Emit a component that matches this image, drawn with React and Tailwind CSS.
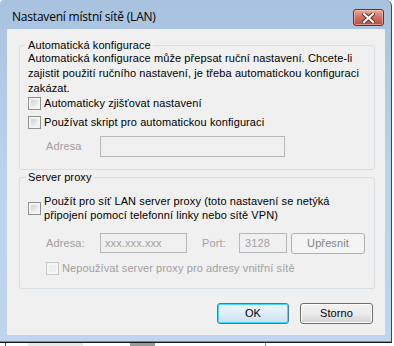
import React from "react";

const Check = ({ disabled }) => (
  <span
    className={`w-[13px] h-[13px] shrink-0 border p-[2px] flex ${
      disabled ? "border-[#c6c6c6] bg-[#f7f7f7]" : "border-[#8e8f8f] bg-[#f4f4f4]"
    }`}
  >
    <span
      className={`flex-1 ${
        disabled
          ? "bg-[#f0f0f0]"
          : "bg-gradient-to-br from-[#cfd1d4] to-[#f7f7f7]"
      }`}
    />
  </span>
);

const Field = ({ className, children }) => (
  <div
    className={`border border-[#b5b8bb] bg-[#f0f0f0] flex items-center text-[#a0a0a0] ${className}`}
  >
    {children}
  </div>
);

const Btn = ({ children, primary, disabled, className }) => (
  <div
    className={`h-[21px] rounded-[3px] border flex items-center justify-center text-[11px] ${
      primary
        ? "border-[#3c7fb1] shadow-[inset_0_0_0_1px_#48d7fb] bg-gradient-to-b from-[#eaf6fd] via-[#e0eef8] to-[#c9e0ef] text-black"
        : disabled
        ? "border-[#adb2b5] bg-[#f4f4f4] text-[#838383]"
        : "border-[#707070] shadow-[inset_0_0_0_1px_#fcfcfc] bg-gradient-to-b from-[#f2f2f2] via-[#ebebeb] to-[#d2d2d2] text-black"
    } ${className}`}
  >
    {children}
  </div>
);

export default function App() {
  return (
    <div className="w-[394px] h-[346px] bg-white overflow-hidden flex flex-col font-['Liberation_Sans',sans-serif] tracking-[0.1px]">
      <div className="w-[392px] h-[342px] shrink-0 rounded-tr-[6px] rounded-tl-[4px] border-r border-[#3b4a5a] bg-gradient-to-b from-[#a8c2df] via-[#bad2ec] to-[#bfd5ee] flex flex-col">
        {/* title bar */}
        <div className="h-[29px] flex items-start pl-[12px] pr-[7px]">
          <div className="pt-[8px] text-[12px] leading-[17px] text-black font-['Open_Sans',sans-serif] tracking-[-0.2px]">
            Nastavení místní sítě (LAN)
          </div>
          <div className="ml-auto mt-[9px] w-[31px] h-[17px] rounded-[3px] border border-[#6e2b22] bg-gradient-to-b from-[#e8a99b] via-[#d0705f] to-[#c04a38] shadow-[inset_0_0_0_1px_rgba(255,220,210,0.5)] flex items-center justify-center">
            <svg width="13" height="10" viewBox="0 0 13 10">
              <path
                d="M2 1 L11 9 M11 1 L2 9"
                stroke="#5a2a24"
                strokeWidth="4"
                strokeLinecap="square"
              />
              <path
                d="M2 1 L11 9 M11 1 L2 9"
                stroke="#ffffff"
                strokeWidth="2.2"
                strokeLinecap="square"
              />
            </svg>
          </div>
        </div>
        {/* client area */}
        <div className="ml-[7px] w-[378px] h-[306px] bg-[#f0f0f0] flex flex-col px-[12px] pt-[10px] text-[11px] text-black">
          <fieldset className="border border-[#d5dfe5] rounded-[3px] pl-[8px] pr-[8px] pb-[12px] w-[356px]">
            <legend className="-ml-[2px] px-[2px] leading-[13px]">
              Automatická konfigurace
            </legend>
            <div className="leading-[15px] mt-[-1px]">
              Automatická konfigurace může přepsat ruční nastavení. Chcete-li
              <br />
              zajistit použití ručního nastavení, je třeba automatickou konfiguraci
              <br />
              zakázat.
            </div>
            <div className="flex items-center gap-[3px] mt-[1px] h-[13px]">
              <Check />
              <span>Automaticky zjišťovat nastavení</span>
            </div>
            <div className="flex items-center gap-[3px] mt-[6px] h-[13px]">
              <Check />
              <span>Používat skript pro automatickou konfiguraci</span>
            </div>
            <div className="flex items-center mt-[7px]">
              <span className="w-[72px] pl-[18px] text-[#a0a0a0]">Adresa</span>
              <Field className="w-[185px] h-[21px]" />
            </div>
          </fieldset>

          <fieldset className="mt-[1px] border border-[#d5dfe5] rounded-[3px] pl-[8px] pr-[8px] pb-[13px] w-[356px]">
            <legend className="-ml-[2px] px-[2px] leading-[13px]">
              Server proxy
            </legend>
            <div className="flex items-center gap-[3px] mt-[10px]">
              <Check />
              <span className="leading-[14px]">
                Použít pro síť LAN server proxy (toto nastavení se netýká
                <br />
                připojení pomocí telefonní linky nebo sítě VPN)
              </span>
            </div>
            <div className="flex items-center mt-[10px]">
              <span className="w-[72px] pl-[18px] text-[#a0a0a0]">Adresa:</span>
              <Field className="w-[87px] h-[20px] pl-[4px]">xxx.xxx.xxx</Field>
              <span className="ml-[15px] w-[37px] text-[#a0a0a0]">Port:</span>
              <Field className="w-[48px] h-[20px] pl-[5px]">3128</Field>
              <Btn disabled className="ml-[4px] w-[74px] mt-[1px]">
                Upřesnit
              </Btn>
            </div>
            <div className="flex items-center gap-[3px] mt-[8px] pl-[18px] h-[13px]">
              <Check disabled />
              <span className="text-[#a0a0a0]">
                Nepoužívat server proxy pro adresy vnitřní sítě
              </span>
            </div>
          </fieldset>

          <div className="flex justify-end gap-[11px] mt-[14px]">
            <Btn primary className="w-[72px]">
              OK
            </Btn>
            <Btn className="w-[73px]">Storno</Btn>
          </div>
        </div>
        <div className="flex-1" />
        <div className="h-[1px] bg-[#2aa7dc]" />
      </div>
      <div className="h-[1px] bg-[#1a1a1a] w-[392px]" />
      <div className="flex-1 relative">
        <div className="absolute left-[5px] top-0 w-[1px] h-[3px] bg-[#555]" />
        <div className="absolute left-[28px] top-0 w-[55px] h-[3px] bg-[#e8e8e8]" />
        <div className="absolute left-[130px] top-0 w-[25px] h-[3px] bg-[#9a9a9a]" />
        <div className="absolute left-[265px] top-0 w-[1px] h-[3px] bg-[#888]" />
      </div>
    </div>
  );
}
